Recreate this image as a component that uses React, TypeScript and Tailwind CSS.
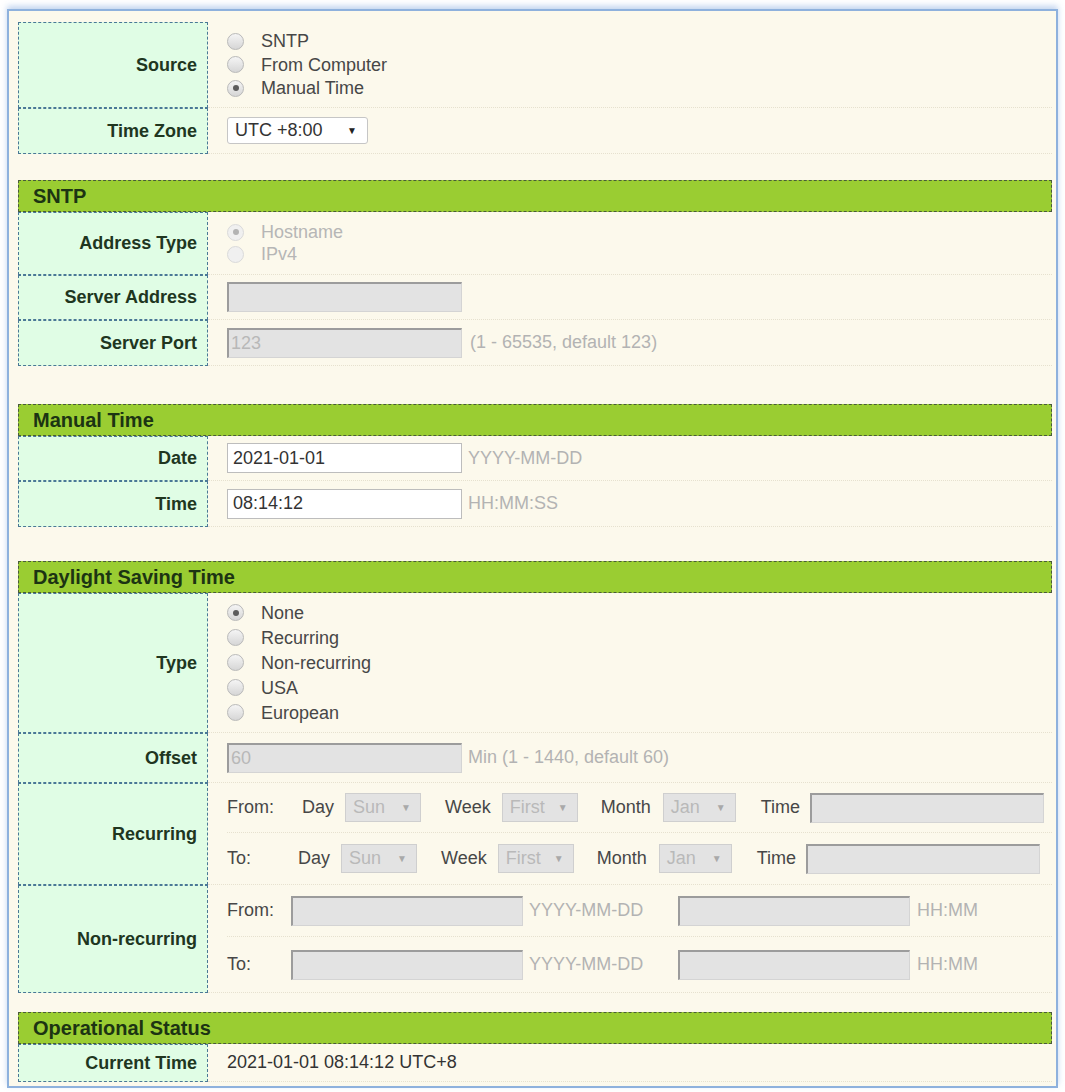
import React from 'react';

const font = { fontFamily: '"Liberation Sans", Arial, sans-serif' };

function Radio({ checked, disabled, label }: { checked?: boolean; disabled?: boolean; label: string }) {
  return (
    <div className="flex h-[18px] items-center">
      <span
        className={`flex h-[17px] w-[17px] shrink-0 items-center justify-center rounded-full border ${
          disabled ? 'border-[#dadada] bg-[#f0f0f0]' : 'border-[#b9b9b9] bg-gradient-to-b from-[#f5f5f5] to-[#d6d6d6]'
        }`}
      >
        {checked && <span className={`h-[6px] w-[6px] rounded-full ${disabled ? 'bg-[#b3b3b3]' : 'bg-[#5c5c5c]'}`} />}
      </span>
      <span className={`ml-[17px] text-[18px] leading-none ${disabled ? 'text-[#b6b6b6]' : 'text-[#474747]'}`}>{label}</span>
    </div>
  );
}

function Label({ text, h }: { text: string; h: string }) {
  return (
    <div
      className={`flex w-[190px] shrink-0 items-center justify-end border border-dashed border-[#4a7896] bg-[#e0fde5] pr-[10px] text-[18px] font-bold text-[#20361f] ${h}`}
    >
      {text}
    </div>
  );
}

function Row({ label, h, children }: { label: string; h: string; children: React.ReactNode }) {
  return (
    <div className="flex">
      <Label text={label} h={h} />
      <div className={`flex flex-1 items-center border-b border-dotted border-[#e6e1cf] pl-[19px] ${h}`}>{children}</div>
    </div>
  );
}

function Header({ text, mt }: { text: string; mt: string }) {
  return (
    <div
      className={`flex h-[32px] items-center border border-dashed border-[#4a5b3a] bg-[#9acd32] pl-[14px] text-[20px] font-bold text-[#1c3413] ${mt}`}
    >
      {text}
    </div>
  );
}

function DisabledInput({ w, value }: { w: string; value?: string }) {
  return (
    <div
      className={`flex h-[30px] shrink-0 items-center border border-[#d4d4d4] border-l-2 border-t-2 border-l-[#9c9c9c] border-t-[#9c9c9c] bg-[#e3e3e3] pl-[2px] text-[18px] text-[#b8b8b8] ${w}`}
    >
      {value}
    </div>
  );
}

function WhiteInput({ value }: { value: string }) {
  return (
    <div className="flex h-[30px] w-[235px] shrink-0 items-center border border-[#bdbdbd] bg-white pl-[5px] text-[18px] text-[#333]">
      {value}
    </div>
  );
}

function DisSelect({ text, w }: { text: string; w: string }) {
  return (
    <div
      className={`flex h-[29px] shrink-0 items-center justify-between border border-[#cfcfcf] bg-[#e3e3e3] pl-[7px] pr-[9px] text-[18px] text-[#b9b9b9] ${w}`}
    >
      <span>{text}</span>
      <span className="text-[10px] text-[#a9a9a9]">▼</span>
    </div>
  );
}

function Hint({ text, cls }: { text: string; cls?: string }) {
  return <span className={`shrink-0 text-[18px] text-[#b3b3b3] ${cls ?? ''}`}>{text}</span>;
}

function RecurLine({ lead, leadW, h, border }: { lead: string; leadW: string; h: string; border?: boolean }) {
  return (
    <div className={`flex items-center text-[18px] text-[#474747] ${h} ${border ? 'border-b border-dotted border-[#e6e1cf]' : ''}`}>
      <span className={leadW}>{lead}</span>
      <span>Day</span>
      <span className="ml-[11px]"><DisSelect text="Sun" w="w-[76px]" /></span>
      <span className="ml-[24px]">Week</span>
      <span className="ml-[11px]"><DisSelect text="First" w="w-[76px]" /></span>
      <span className="ml-[23px]">Month</span>
      <span className="ml-[12px]"><DisSelect text="Jan" w="w-[73px]" /></span>
      <span className="ml-[25px]">Time</span>
      <span className="ml-[10px]"><DisabledInput w="w-[234px]" /></span>
    </div>
  );
}

function NonRecurLine({ lead, h, border }: { lead: string; h: string; border?: boolean }) {
  return (
    <div className={`flex items-center text-[18px] text-[#474747] ${h} ${border ? 'border-b border-dotted border-[#e6e1cf]' : ''}`}>
      <span className="w-[64px]">{lead}</span>
      <DisabledInput w="w-[232px]" />
      <Hint text="YYYY-MM-DD" cls="ml-[6px] w-[149px]" />
      <DisabledInput w="w-[232px]" />
      <Hint text="HH:MM" cls="ml-[7px]" />
    </div>
  );
}

export default function App() {
  return (
    <div className="min-h-[1092px] w-[1065px] bg-white pt-[9px] pl-[7px]" style={font}>
      <div className="h-[1079px] w-[1051px] border-2 border-[#8eb1dd] bg-[#fcf9ec] pt-[11px] pl-[9px] pr-[4px] shadow-[0_-3px_6px_rgba(120,160,220,0.45)]">
        <Row label="Source" h="h-[86px]">
          <div className="flex flex-col gap-[5.5px]">
            <Radio label="SNTP" />
            <Radio label="From Computer" />
            <Radio label="Manual Time" checked />
          </div>
        </Row>
        <Row label="Time Zone" h="h-[46px]">
          <div className="flex h-[27px] w-[141px] items-center justify-between rounded-[3px] border border-[#c6c6c6] bg-white pl-[7px] pr-[10px] text-[18px] text-[#333]">
            <span>UTC +8:00</span>
            <span className="text-[10px] text-[#222]">▼</span>
          </div>
        </Row>

        <Header text="SNTP" mt="mt-[26px]" />
        <Row label="Address Type" h="h-[63px]">
          <div className="flex flex-col gap-[4px]">
            <Radio label="Hostname" checked disabled />
            <Radio label="IPv4" disabled />
          </div>
        </Row>
        <Row label="Server Address" h="h-[45px]">
          <DisabledInput w="w-[235px]" />
        </Row>
        <Row label="Server Port" h="h-[46px]">
          <DisabledInput w="w-[235px]" value="123" />
          <Hint text="(1 - 65535, default 123)" cls="ml-[8px]" />
        </Row>

        <Header text="Manual Time" mt="mt-[38px]" />
        <Row label="Date" h="h-[45px]">
          <WhiteInput value="2021-01-01" />
          <Hint text="YYYY-MM-DD" cls="ml-[6px]" />
        </Row>
        <Row label="Time" h="h-[46px]">
          <WhiteInput value="08:14:12" />
          <Hint text="HH:MM:SS" cls="ml-[6px]" />
        </Row>

        <Header text="Daylight Saving Time" mt="mt-[34px]" />
        <Row label="Type" h="h-[140px]">
          <div className="flex flex-col gap-[7px]">
            <Radio label="None" checked />
            <Radio label="Recurring" />
            <Radio label="Non-recurring" />
            <Radio label="USA" />
            <Radio label="European" />
          </div>
        </Row>
        <Row label="Offset" h="h-[50px]">
          <DisabledInput w="w-[235px]" value="60" />
          <Hint text="Min (1 - 1440, default 60)" cls="ml-[6px]" />
        </Row>
        <div className="flex">
          <Label text="Recurring" h="h-[102px]" />
          <div className="flex h-[102px] flex-1 flex-col border-b border-dotted border-[#e6e1cf] pl-[19px]">
            <RecurLine lead="From:" leadW="w-[75px]" h="h-[50px]" border />
            <RecurLine lead="To:" leadW="w-[71px]" h="h-[51px]" />
          </div>
        </div>
        <div className="flex">
          <Label text="Non-recurring" h="h-[108px]" />
          <div className="flex h-[108px] flex-1 flex-col border-b border-dotted border-[#e6e1cf] pl-[19px]">
            <NonRecurLine lead="From:" h="h-[52px]" border />
            <NonRecurLine lead="To:" h="h-[55px]" />
          </div>
        </div>

        <Header text="Operational Status" mt="mt-[19px]" />
        <Row label="Current Time" h="h-[38px]">
          <span className="text-[18px] text-[#333]">2021-01-01 08:14:12 UTC+8</span>
        </Row>
      </div>
    </div>
  );
}
